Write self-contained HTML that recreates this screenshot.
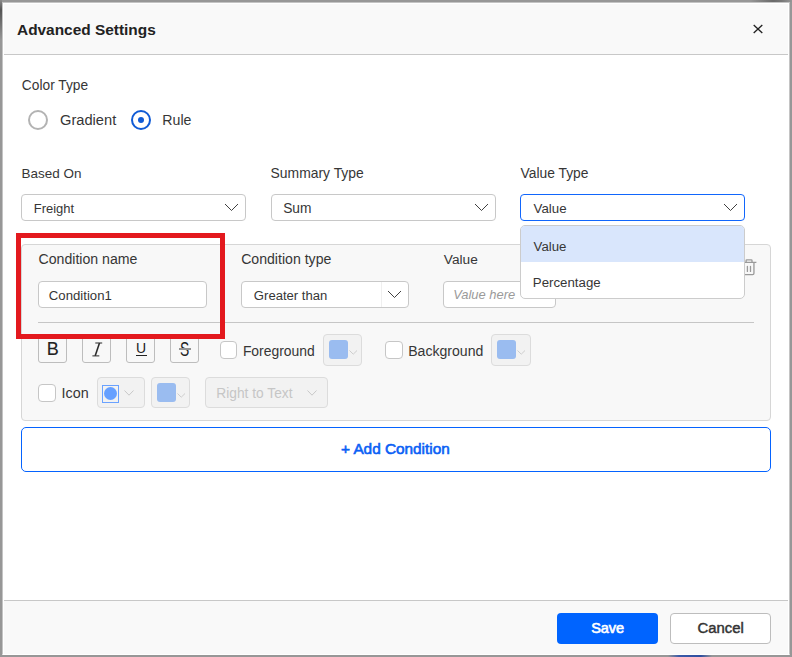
<!DOCTYPE html>
<html><head><meta charset="utf-8">
<style>
*{box-sizing:border-box;margin:0;padding:0}
html,body{width:792px;height:657px;overflow:hidden;background:#979797;font-family:"Liberation Sans",sans-serif;color:#333}
.a{position:absolute}
#dlg{position:absolute;left:2px;top:2px;width:788px;height:653px;border:1px solid #c4c4c4;border-bottom-color:#fff;background:#fff;overflow:hidden}
#hdr{position:absolute;left:0;top:0;width:786px;height:52px;background:#f9f9f9;border-bottom:1px solid #c8c8c8}
.t{position:absolute;white-space:nowrap;line-height:1}
.lbl{font-size:14px;color:#363636}
.dd{position:absolute;height:27px;border:1px solid #c8c8c8;border-radius:4px;background:#fff}
.chev{position:absolute}
.card{position:absolute;left:18px;top:241px;width:750px;height:177px;background:#f8f8f8;border:1px solid #d6d6d6;border-radius:4px}
.inp{position:absolute;height:27px;border:1px solid #c8c8c8;border-radius:4px;background:#fff}
.btn{position:absolute;width:29px;height:29px;border:1px solid #bdbdbd;border-radius:3px;background:#f8f8f8}
.cb{position:absolute;width:17px;height:18px;border:1px solid #c6c6c6;border-radius:4px;background:#fff}
.pick{position:absolute;height:32px;border:1px solid #dcdcdc;border-radius:4px;background:#f2f2f2}
.sw{position:absolute;width:19px;height:19px;border-radius:3px;background:#9abcf0}
</style></head>
<body>
<div id="dlg">
  <div id="hdr">
    <div id="title" class="t" style="left:14.02px;top:19.48px;font-size:15.41px;font-weight:700;color:#222">Advanced Settings</div>
    <svg class="a" style="left:749.5px;top:21px" width="10" height="10" viewBox="0 0 10 10"><path d="M0.7 1.1L9.3 8.9M9.3 1.1L0.7 8.9" stroke="#222" stroke-width="1.35"/></svg>
  </div>

  <div id="colortype" class="t lbl" style="left:18.86px;top:75.6px;font-size:13.76px">Color Type</div>
  <!-- radios -->
  <div class="a" style="left:25px;top:107px;width:20px;height:20px;border:2px solid #b3b3b3;border-radius:50%"></div>
  <div id="gradient" class="t lbl" style="left:57.0px;top:110.46px;font-size:14.67px">Gradient</div>
  <div class="a" style="left:128px;top:107px;width:20px;height:20px;border:2px solid #0f5bd6;border-radius:50%"></div>
  <div class="a" style="left:135px;top:114px;width:6px;height:6px;background:#0f5bd6;border-radius:50%"></div>
  <div id="rule" class="t lbl" style="left:159.3px;top:109.74px;font-size:14.16px">Rule</div>

  <div id="basedon" class="t lbl" style="left:18.58px;top:164.3px;font-size:13.48px">Based On</div>
  <div id="summary" class="t lbl" style="left:267.62px;top:163.88px;font-size:13.9px">Summary Type</div>
  <div id="valuetype" class="t lbl" style="left:517.58px;top:163.88px;font-size:13.83px">Value Type</div>

  <div class="dd" style="left:18px;top:191px;width:225px"><div id="freight" class="t lbl" style="left:11.72px;top:6.58px;font-size:12.99px">Freight</div>
    <svg class="chev" style="left:202px;top:8px" width="15" height="9" viewBox="0 0 15 9"><path d="M1 1L7.5 7.5L14 1" fill="none" stroke="#2a2a2a" stroke-width="0.9"/></svg></div>
  <div class="dd" style="left:268px;top:191px;width:225px"><div id="sum" class="t lbl" style="left:11.16px;top:6.58px;font-size:13.76px">Sum</div>
    <svg class="chev" style="left:202px;top:8px" width="15" height="9" viewBox="0 0 15 9"><path d="M1 1L7.5 7.5L14 1" fill="none" stroke="#2a2a2a" stroke-width="0.9"/></svg></div>
  <div class="dd" style="left:517px;top:191px;width:225px;border-color:#1166fc"><div id="valuedd" class="t lbl" style="left:12.56px;top:7.28px;font-size:13.31px">Value</div>
    <svg class="chev" style="left:202px;top:8px" width="15" height="9" viewBox="0 0 15 9"><path d="M1 1L7.5 7.5L14 1" fill="none" stroke="#2a2a2a" stroke-width="0.9"/></svg></div>

  <!-- card -->
  <div class="card"></div>
  <div id="condname" class="t lbl" style="left:35.58px;top:249.04px;font-size:14.12px">Condition name</div>
  <div id="condtype" class="t lbl" style="left:238.14px;top:249.04px;font-size:14.12px">Condition type</div>
  <div id="valuelbl" class="t lbl" style="left:440.86px;top:250.14px;font-size:13.67px">Value</div>

  <div class="inp" style="left:35px;top:278px;width:169px"><div id="cond1" class="t lbl" style="left:9.86px;top:7.32px;font-size:13.16px">Condition1</div></div>
  <div class="inp" style="left:238px;top:278px;width:168px"><div id="greater" class="t lbl" style="left:11.86px;top:7.32px;font-size:13.08px">Greater than</div>
    <div class="a" style="left:139px;top:0;width:1px;height:25px;background:#efefef"></div>
    <svg class="chev" style="left:145px;top:8.3px" width="15" height="9" viewBox="0 0 15 9"><path d="M1 1L7.5 7.5L14 1" fill="none" stroke="#2a2a2a" stroke-width="0.9"/></svg></div>
  <div class="inp" style="left:440px;top:278px;width:113px"><div id="valuehere" class="t" style="left:9.16px;top:7.44px;font-size:12.95px;font-style:italic;color:#9a9a9a">Value here</div></div>

  <!-- trash -->
  <svg class="a" style="left:735px;top:251px" width="24" height="26" viewBox="0 0 24 26"><path d="M8.1 8.3V6.5Q8.1 5.8 8.8 5.8H13.3Q14 5.8 14 6.5V8.3M3.8 8.3H18.4M6 8.3V19.3Q6 20.65 7.35 20.65H14.6Q15.95 20.65 15.95 19.3V8.3" fill="none" stroke="#9a9a9a" stroke-width="1.3"/><path d="M9.4 12.4V17.4M12.5 12.4V17.4" fill="none" stroke="#9a9a9a" stroke-width="1.3" stroke-linecap="round"/></svg>

  <div class="a" style="left:35px;top:319px;width:716px;height:1px;background:#c6c6c6"></div>

  <!-- style buttons -->
  <div class="btn" style="left:35px;top:331px"><div id="gB" class="t" style="left:7.8px;top:4.6px;font-size:18px;color:#222;-webkit-text-stroke:0.12px #222">B</div></div>
  <div class="btn" style="left:79px;top:331px"><svg id="gI" class="a" style="left:0;top:0" width="29" height="29" viewBox="0 0 29 29"><path d="M12.3 8.0H19.2M9.4 20.9H16.3" fill="none" stroke="#2a2a2a" stroke-width="1.0"/><path d="M16.5 8.1L12.2 20.8" fill="none" stroke="#2a2a2a" stroke-width="1.55"/></svg></div>
  <div class="btn" style="left:123px;top:331px"><div id="gU" class="t" style="left:9px;top:5.6px;font-size:14px;color:#222">U</div><div class="a" style="left:9px;top:19.7px;width:10.8px;height:1.4px;background:#222"></div></div>
  <div class="btn" style="left:167px;top:331px"><div id="gS" class="t" style="left:9.3px;top:4px;font-size:20px;color:#222;transform:scaleX(0.69);transform-origin:0 0">S</div><div class="a" style="left:7.5px;top:13.2px;width:12.5px;height:1.5px;background:#949494"></div></div>

  <div class="cb" style="left:217px;top:338px"></div>
  <div id="fg" class="t lbl" style="left:239.88px;top:342px;font-size:13.91px">Foreground</div>
  <div class="pick" style="left:320px;top:331px;width:39px"><div class="sw" style="left:5px;top:5px"></div>
    <svg class="chev" style="left:25px;top:15px" width="9" height="6" viewBox="0 0 9 6"><path d="M0.5 0.5L4.25 4.2L8 0.5" fill="none" stroke="#cdcdcd" stroke-width="1"/></svg></div>

  <div class="cb" style="left:382px;top:338px;width:18px"></div>
  <div id="bg" class="t lbl" style="left:405.16px;top:340.62px;font-size:14.09px">Background</div>
  <div class="pick" style="left:488px;top:331px;width:40px"><div class="sw" style="left:5px;top:5px"></div>
    <svg class="chev" style="left:25px;top:15px" width="9" height="6" viewBox="0 0 9 6"><path d="M0.5 0.5L4.25 4.2L8 0.5" fill="none" stroke="#cdcdcd" stroke-width="1"/></svg></div>

  <!-- icon row -->
  <div class="cb" style="left:35px;top:381px;width:18px"></div>
  <div id="icon" class="t lbl" style="left:58.58px;top:383.06px;font-size:14.35px">Icon</div>
  <div class="pick" style="left:94px;top:374px;width:48px;height:31px">
    <div class="a" style="left:4px;top:7px;width:17px;height:18px;border:1px solid #6aa2ff"></div>
    <div class="a" style="left:5.6px;top:8.8px;width:13.7px;height:13.7px;border-radius:50%;background:#66a0ff"></div>
    <svg class="chev" style="left:26px;top:12px" width="11" height="7" viewBox="0 0 11 7"><path d="M0.5 0.5L5 5.2L9.5 0.5" fill="none" stroke="#c8c8c8" stroke-width="1"/></svg></div>
  <div class="pick" style="left:148px;top:374px;width:39px;height:31px"><div class="sw" style="left:5px;top:5px"></div>
    <svg class="chev" style="left:25px;top:15px" width="9" height="6" viewBox="0 0 9 6"><path d="M0.5 0.5L4.25 4.2L8 0.5" fill="none" stroke="#cdcdcd" stroke-width="1"/></svg></div>
  <div class="pick" style="left:202px;top:374px;width:123px;height:31px">
    <div id="rtt" class="t" style="left:10.32px;top:9.0px;font-size:13.75px;color:#c6c6c6">Right to Text</div>
    <svg class="chev" style="left:101px;top:11.6px" width="11" height="7" viewBox="0 0 11 7"><path d="M0.5 0.5L5 5.2L9.5 0.5" fill="none" stroke="#c8c8c8" stroke-width="1"/></svg></div>

  <!-- add condition -->
  <div class="a" style="left:18px;top:424px;width:750px;height:45px;border:1.5px solid #0563ff;border-radius:5px;background:#fff"></div>
  <div id="add" class="t" style="left:338.0px;top:438.14px;font-size:15.35px;font-weight:400;-webkit-text-stroke:0.6px currentColor;color:#0a60f5">+ Add Condition</div>

  <!-- footer -->
  <div class="a" style="left:0;top:597px;width:786px;height:57px;background:#f9f9f9;border-top:1px solid #c8c8c8"></div>
  <div class="a" style="left:554px;top:610px;width:101px;height:31px;background:#0064ff;border-radius:4px"></div>
  <div id="save" class="t" style="left:588.14px;top:618.32px;font-size:14.5px;font-weight:400;-webkit-text-stroke:0.65px currentColor;color:#fff">Save</div>
  <div class="a" style="left:667px;top:610px;width:101px;height:31px;background:#fff;border:1px solid #bdbdbd;border-radius:4px"></div>
  <div id="cancel" class="t" style="left:694.42px;top:618.32px;font-size:14.88px;font-weight:400;-webkit-text-stroke:0.45px currentColor;color:#333">Cancel</div>

  <!-- popup -->
  <div class="a" style="left:517px;top:222px;width:225px;height:74px;background:#fff;border:1px solid #cccccc;border-radius:5px;overflow:hidden">
    <div class="a" style="left:0;top:0;width:223px;height:36px;background:#d9e6fc"></div>
    <div id="popval" class="t lbl" style="left:12.56px;top:13.84px;font-size:13.23px">Value</div>
    <div id="pct" class="t lbl" style="left:11.86px;top:50.44px;font-size:13.26px">Percentage</div>
  </div>

  <!-- red highlight -->
  <div class="a" style="left:13px;top:230px;width:209px;height:106px;border:5px solid #e3191e"></div>
</div>
<div class="a" style="left:3px;top:3px;width:786px;height:1px;background:#fff"></div>
<div class="a" style="left:3px;top:3px;width:1px;height:651px;background:#fff"></div>
<div class="a" style="left:788px;top:3px;width:1px;height:651px;background:#fff"></div>
<div class="a" style="left:668px;top:655px;width:44px;height:2px;background:linear-gradient(90deg,#979797,#3a5aa8 25%,#2f4f9f 75%,#979797)"></div>
<div class="a" style="left:0;top:0;width:2px;height:40px;background:linear-gradient(180deg,#8a8a8a,#555 25%,#666 45%,#979797)"></div>
<div class="a" style="left:750px;top:0;width:42px;height:2px;background:linear-gradient(90deg,#979797,#6a6a6a 55%,#777 75%,#979797)"></div>
</body></html>
